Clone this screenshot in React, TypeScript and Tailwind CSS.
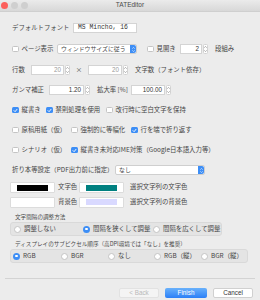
import React from 'react';

const jp = "font-['Noto_Sans_CJK_JP','Noto_Sans',sans-serif]";
const txt = `${jp} text-[6.4px] leading-none text-[#454545] whitespace-nowrap`;

function Check({ checked = false }: { checked?: boolean }) {
  return checked ? (
    <span className="flex h-[6.5px] w-[6.5px] shrink-0 items-center justify-center rounded-[1.5px] bg-[#3d8ef6]">
      <svg width="5" height="5" viewBox="0 0 10 10">
        <path d="M2 5.2 L4.2 7.4 L8 2.6" fill="none" stroke="white" strokeWidth="1.8" strokeLinecap="round" strokeLinejoin="round" />
      </svg>
    </span>
  ) : (
    <span className="h-[6.5px] w-[6.5px] shrink-0 rounded-[1.5px] border-[0.5px] border-[#c4c4c4] bg-white" />
  );
}

function Radio({ on = false }: { on?: boolean }) {
  return on ? (
    <span className="flex h-[7px] w-[7px] shrink-0 items-center justify-center rounded-full bg-[#3d8ef6]">
      <span className="h-[2.5px] w-[2.5px] rounded-full bg-white" />
    </span>
  ) : (
    <span className="h-[7px] w-[7px] shrink-0 rounded-full border-[0.5px] border-[#c4c4c4] bg-white" />
  );
}

function Stepper() {
  return (
    <span className="flex h-[10px] w-[5px] shrink-0 flex-col items-center justify-center gap-[1.5px] rounded-[1.5px] border-[0.5px] border-[#d2d2d2] bg-white">
      <svg width="3" height="2" viewBox="0 0 6 4">
        <path d="M0.5 3.5 L3 0.8 L5.5 3.5" fill="none" stroke="#666" strokeWidth="1" />
      </svg>
      <svg width="3" height="2" viewBox="0 0 6 4">
        <path d="M0.5 0.5 L3 3.2 L5.5 0.5" fill="none" stroke="#666" strokeWidth="1" />
      </svg>
    </span>
  );
}

function NumField({ value, w, dim = false }: { value: string; w: string; dim?: boolean }) {
  return (
    <div className="flex items-center gap-[1px]">
      <div
        className={`flex h-[10px] ${w} items-center justify-end border-[0.5px] border-[#d4d4d4] bg-white pr-[2px] font-['Liberation_Sans',sans-serif] text-[6.3px] leading-none ${dim ? 'text-[#9a9a9a]' : 'text-[#333]'}`}
      >
        {value}
      </div>
      <Stepper />
    </div>
  );
}

function Select({ label, w }: { label: string; w: string }) {
  return (
    <div className={`flex h-[10px] ${w} items-center rounded-[2px] border-[0.5px] border-[#cfcfcf] bg-white`}>
      <span className={`${jp} flex-1 whitespace-nowrap pl-[3px] text-[5.9px] leading-none text-[#454545]`}>{label}</span>
      <span className="flex h-full w-[6px] shrink-0 flex-col items-center justify-center gap-[1px] rounded-r-[2px] bg-[#3d8ef6]">
        <svg width="3" height="2" viewBox="0 0 6 4">
          <path d="M0.5 3.5 L3 0.8 L5.5 3.5" fill="none" stroke="white" strokeWidth="1.1" />
        </svg>
        <svg width="3" height="2" viewBox="0 0 6 4">
          <path d="M0.5 0.5 L3 3.2 L5.5 0.5" fill="none" stroke="white" strokeWidth="1.1" />
        </svg>
      </span>
    </div>
  );
}

function CheckItem({ label, checked, w }: { label: string; checked?: boolean; w?: string }) {
  return (
    <div className={`flex items-center gap-[3px] ${w ?? ''}`}>
      <Check checked={checked} />
      <span className={txt}>{label}</span>
    </div>
  );
}

function RadioItem({ label, on, w }: { label: string; on?: boolean; w?: string }) {
  return (
    <div className={`flex items-center gap-[3px] ${w ?? ''}`}>
      <Radio on={on} />
      <span className={txt}>{label}</span>
    </div>
  );
}

function Swatch({ color }: { color?: string }) {
  return (
    <div className="flex h-[11px] w-[45px] items-center justify-center rounded-[1px] border-[0.5px] border-[#dcdcdc] bg-white">
      {color && <span className={`h-[6px] w-[31px] ${color}`} />}
    </div>
  );
}

export default function App() {
  return (
    <div className="flex h-[300px] w-[260px] flex-col overflow-hidden bg-[#ececec]">
      <div className="relative flex h-[12px] shrink-0 items-center justify-center border-b-[0.5px] border-[#cfcfcf] bg-gradient-to-b from-[#ebebeb] to-[#d8d8d8]">
        <div className="absolute left-[1px] top-[2px] flex gap-[3px]">
          <span className="h-[7px] w-[7px] rounded-full bg-[#fc605c]" />
          <span className="h-[7px] w-[7px] rounded-full bg-[#cfcfcf]" />
          <span className="h-[7px] w-[7px] rounded-full bg-[#cfcfcf]" />
        </div>
        <span className="font-['Liberation_Sans',sans-serif] text-[6.5px] leading-none text-[#4a4a4a]">TATEditor</span>
      </div>

      <div className="flex flex-col pt-[6px]">
        <div className="flex h-[20px] items-center pl-[12px]">
          <span className={`${txt} w-[61px]`}>デフォルトフォント</span>
          <div className="flex h-[10px] w-[64px] items-center border-[0.5px] border-[#d4d4d4] bg-white pl-[4px] font-['Liberation_Mono',monospace] text-[6.4px] leading-none text-[#333]">
            MS Mincho, 16
          </div>
        </div>

        <div className="mt-[1px] flex h-[20px] items-center pl-[12px]">
          <CheckItem label="ページ表示" w="w-[45px]" />
          <Select label="ウィンドウサイズに従う" w="w-[80px]" />
          <div className="ml-[10px] w-[33px]">
            <CheckItem label="見開き" />
          </div>
          <NumField value="2" w="w-[22px]" />
          <span className={`${txt} ml-[7px]`}>段組み</span>
        </div>

        <div className="mt-[1px] flex h-[20px] items-center pl-[12px]">
          <span className={`${txt} w-[19px]`}>行数</span>
          <NumField value="20" w="w-[33px]" dim />
          <span className={`${txt} w-[18px] text-center text-[#666]`}>×</span>
          <NumField value="20" w="w-[34px]" dim />
          <span className={`${txt} ml-[7px]`}>文字数（フォント依存）</span>
        </div>

        <div className="flex h-[20px] items-center pl-[12px]">
          <span className={`${txt} w-[37px]`}>ガンマ補正</span>
          <NumField value="1.20" w="w-[35px]" />
          <span className={`${txt} ml-[7px] w-[34px]`}>拡大率 [%]</span>
          <NumField value="100.00" w="w-[34px]" />
        </div>

        <div className="flex h-[20px] items-center pl-[12px]">
          <CheckItem label="縦書き" checked w="w-[34px]" />
          <CheckItem label="禁則処理を使用" checked w="w-[60px]" />
          <CheckItem label="改行時に空白文字を保持" />
        </div>

        <div className="flex h-[20px] items-center pl-[12px]">
          <CheckItem label="原稿用紙（仮）" w="w-[59px]" />
          <CheckItem label="強制的に等幅化" w="w-[60px]" />
          <CheckItem label="行を端で折り返す" checked />
        </div>

        <div className="flex h-[20px] items-center pl-[12px]">
          <CheckItem label="シナリオ（仮）" w="w-[59px]" />
          <CheckItem label="縦書き未対応IME対策（Google日本語入力等）" checked />
        </div>

        <div className="flex h-[20px] items-center pl-[12px]">
          <span className={`${txt} w-[103px]`}>折り本等設定（PDF出力前に指定）</span>
          <Select label="なし" w="w-[90px]" />
        </div>

        <div className="mt-[2px] flex h-[11px] items-center pl-[10px]">
          <Swatch color="bg-black" />
          <span className={`${txt} ml-[3px] w-[21px]`}>文字色</span>
          <Swatch color="bg-[#008080]" />
          <span className={`${txt} ml-[6px]`}>選択文字列の文字色</span>
        </div>

        <div className="mt-[4px] flex h-[10px] items-center pl-[10px]">
          <Swatch />
          <span className={`${txt} ml-[3px] w-[21px]`}>背景色</span>
          <Swatch color="bg-[#d9d9ff]" />
          <span className={`${txt} ml-[6px]`}>選択文字列の背景色</span>
        </div>

        <div className="mt-[6px] flex h-[9px] items-center pl-[15px]">
          <span className={`${jp} text-[5.6px] leading-none text-[#4a4a4a]`}>文字間隔の調整方法</span>
        </div>
        <div className="ml-[10px] flex h-[14px] w-[212px] items-center rounded-[3px] border-[0.5px] border-[#d9d9d9] bg-[#e4e4e4] pl-[3px]">
          <RadioItem label="調整しない" w="w-[69px]" />
          <RadioItem label="間隔を狭くして調整" on w="w-[70px]" />
          <RadioItem label="間隔を広くして調整" />
        </div>

        <div className="mt-[4px] flex h-[9px] items-center pl-[15px]">
          <span className={`${jp} text-[5.6px] leading-none text-[#4a4a4a]`}>
            ディスプレイのサブピクセル順序（高DPI環境では「なし」を推奨）
          </span>
        </div>
        <div className="ml-[10px] flex h-[14px] w-[238px] items-center rounded-[3px] border-[0.5px] border-[#d9d9d9] bg-[#e4e4e4] pl-[2px]">
          <RadioItem label="RGB" on w="w-[48px]" />
          <RadioItem label="BGR" w="w-[47px]" />
          <RadioItem label="なし" w="w-[46px]" />
          <RadioItem label="RGB（縦）" w="w-[47px]" />
          <RadioItem label="BGR（縦）" />
        </div>

        <div className="mx-[5px] mt-[15px] border-t-[0.5px] border-[#d3d3d3]" />

        <div className="mt-[9px] flex items-center justify-end gap-[6px] pr-[7px]">
          <button type="button" className="flex h-[10px] w-[40px] items-center justify-center rounded-[2px] border-[0.5px] border-[#e2e2e2] bg-[#f4f4f4] font-['Liberation_Sans',sans-serif] text-[6.3px] leading-none text-[#b9b9b9]">
            &lt; Back
          </button>
          <button type="button" className="flex h-[10px] w-[42px] items-center justify-center rounded-[2px] bg-gradient-to-b from-[#69b1fb] to-[#2a7ff7] font-['Liberation_Sans',sans-serif] text-[6.3px] leading-none text-white">
            Finish
          </button>
          <button type="button" className="flex h-[10px] w-[40px] items-center justify-center rounded-[2px] border-[0.5px] border-[#d0d0d0] bg-white font-['Liberation_Sans',sans-serif] text-[6.3px] leading-none text-[#333]">
            Cancel
          </button>
        </div>
      </div>
    </div>
  );
}
